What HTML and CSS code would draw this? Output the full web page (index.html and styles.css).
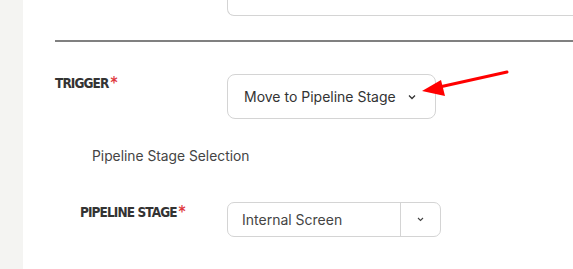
FILE: index.html
```html
<!doctype html>
<html lang="en">

<head>
    <meta charset="UTF-8">
    <title>Trigger</title>
    <link rel="stylesheet" href="styles.css">
</head>

<body>
    <div class="page">
        <div class="sidebar"></div>
        <div class="main">
            <div class="row">
                <div></div>
                <div class="card-end"></div>
            </div>
            <hr class="divider">

            <div class="row trigger-row">
                <label class="label">TRIGGER<span class="req">*</span></label>
                <div class="select">
                    <span>Move to Pipeline Stage</span>
                    <svg class="chev" width="8" height="6" viewBox="0 0 8 6"><path d="M1 1.5 L4 4.5 L7 1.5" fill="none" stroke="#333" stroke-width="1.3"/></svg>
                </div>
                <svg class="arrow" width="100" height="30" viewBox="0 0 100 30">
                    <line x1="94" y1="2" x2="22" y2="18" stroke="#f00" stroke-width="3" stroke-linecap="round"/>
                    <polygon points="9,21 28,10 32,26" fill="#f00"/>
                </svg>
            </div>

            <div class="section-title">Pipeline Stage Selection</div>

            <div class="row stage-row">
                <label class="label sub">PIPELINE STAGE<span class="req">*</span></label>
                <div class="split-select">
                    <span class="value">Internal Screen</span>
                    <span class="toggle">
                        <svg width="7" height="5" viewBox="0 0 7 5"><path d="M1 1 L3.5 3.5 L6 1" fill="none" stroke="#444" stroke-width="1.1"/></svg>
                    </span>
                </div>
            </div>
        </div>
    </div>
</body>

</html>
```

FILE: styles.css
```css
body {
    margin: 0;
    font-family: Inter, "Noto Sans", sans-serif;
    color: #333;
    background: #fff;
}

.page {
    display: flex;
    height: 269px;
    overflow: hidden;
}

.sidebar {
    width: 23px;
    flex: none;
    background: #f4f4f2;
}

.main {
    flex: 1;
    padding-left: 32px;
}

.row {
    display: grid;
    grid-template-columns: 172px auto;
    position: relative;
}

.card-end {
    height: 15px;
    border: 1px solid #d4d4d4;
    border-top: none;
    border-right: none;
    border-radius: 0 0 0 7px;
}

.divider {
    margin: 24px 0 0;
    border: none;
    height: 2px;
    background: #808080;
}

.trigger-row {
    margin-top: 32px;
    justify-items: start;
}

.label {
    font-family: "DejaVu Sans Condensed", "DejaVu Sans", sans-serif;
    font-stretch: condensed;
    font-weight: bold;
    font-size: 13.5px;
    letter-spacing: -0.9px;
    color: #333;
    padding-top: 1px;
}

.req {
    color: #e0383e;
    margin-left: 2px;
    font-size: 15px;
    vertical-align: top;
    line-height: 16px;
}

.select {
    display: flex;
    align-items: center;
    gap: 12px;
    height: 43px;
    padding: 0 19px 0 16px;
    border: 1px solid #d4d4d4;
    border-radius: 8px;
    font-size: 14px;
    color: #333;
}

.arrow {
    position: absolute;
    left: 358px;
    top: -4px;
}

.section-title {
    margin: 29px 0 0 37px;
    font-size: 13.8px;
    color: #444;
}

.stage-row {
    margin-top: 38px;
    grid-template-columns: 147px auto;
    padding-left: 25px;
    justify-items: start;
}

.label.sub {
    padding-top: 2px;
}

.split-select {
    display: flex;
    height: 33px;
    border: 1px solid #d4d4d4;
    border-radius: 7px;
    font-size: 14px;
    color: #444;
}

.split-select .value {
    width: 158px;
    padding-left: 14px;
    display: flex;
    align-items: center;
    border-right: 1px solid #d4d4d4;
}

.split-select .toggle {
    width: 39px;
    display: flex;
    align-items: center;
    justify-content: center;
}
```
